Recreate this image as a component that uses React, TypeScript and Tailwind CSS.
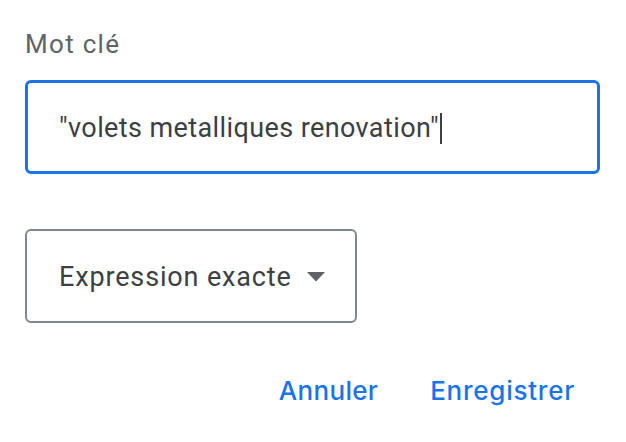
import React from "react";

const roboto = { fontFamily: "Roboto, 'Liberation Sans', sans-serif" };

export default function App() {
  return (
    <div className="w-[626px] h-[442px] bg-white pt-[26px] pl-[25px]" style={roboto}>
      <div className="text-[26px] leading-[36px] tracking-[1.3px] text-[#5f6368]">Mot clé</div>

      <div className="mt-[18px] w-[575px] h-[94px] rounded-[6px] border-[3px] border-[#1a73e8] flex items-center pl-[31px] pt-[2px]">
        <span className="text-[27px] tracking-[0.4px] text-[#3c4043]">"volets metalliques renovation"</span>
        <span className="ml-[1px] w-[2px] h-[31px] bg-[#3c4043]" />
      </div>

      <div className="mt-[55px] w-[332px] h-[94px] rounded-[6px] border-2 border-[#80868b] flex items-center pl-[32px] pt-[2px]">
        <span className="text-[27px] tracking-[0.85px] text-[#3c4043]">Expression exacte</span>
        <svg className="ml-[15px]" width="18" height="10" viewBox="0 0 18 10">
          <path d="M0 0 L18 0 L9 9.5 Z" fill="#5f6368" />
        </svg>
      </div>

      <div className="mt-[53px] w-[575px] flex justify-end gap-[52px] pr-[25px]" style={{ fontFamily: "Inter, Roboto, sans-serif" }}>
        <button className="text-[26px] font-medium tracking-[0.3px] text-[#1a73e8] leading-[30px]">Annuler</button>
        <button className="text-[26px] font-medium tracking-[0.75px] text-[#1a73e8] leading-[30px]">Enregistrer</button>
      </div>
    </div>
  );
}
